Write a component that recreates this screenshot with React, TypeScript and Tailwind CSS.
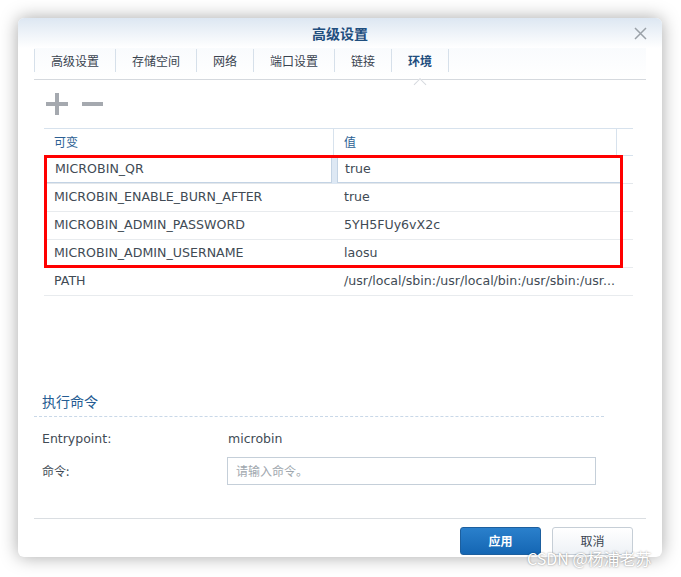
import React from 'react';

const font = { fontFamily: '"DejaVu Sans", "Noto Sans CJK SC", sans-serif' };
const cjk = { fontFamily: '"Noto Sans CJK SC", "DejaVu Sans", sans-serif' };

const tabs = ['高级设置', '存储空间', '网络', '端口设置', '链接', '环境'];

const rows: [string, string][] = [
  ['MICROBIN_ENABLE_BURN_AFTER', 'true'],
  ['MICROBIN_ADMIN_PASSWORD', '5YH5FUy6vX2c'],
  ['MICROBIN_ADMIN_USERNAME', 'laosu'],
  ['PATH', '/usr/local/sbin:/usr/local/bin:/usr/sbin:/usr...'],
];

export default function App() {
  return (
    <div className="relative h-[577px] w-[681px] overflow-hidden bg-white pl-[18px] pt-[18px]" style={font}>
      <div className="flex h-[539px] w-[644px] flex-col rounded-[6px] bg-white shadow-[0_0_18px_rgba(0,0,0,0.35)]">
        {/* header */}
        <div className="relative flex h-[30px] items-center justify-center rounded-t-[6px] bg-gradient-to-b from-[#dde7f2] to-white">
          <span className="text-[14px] font-bold text-[#1f4e7e]" style={cjk}>高级设置</span>
          <svg className="absolute right-[15px] top-[9px]" width="13" height="13" viewBox="0 0 13 13">
            <path d="M1 1L12 12M12 1L1 12" stroke="#9aa1a8" strokeWidth="1.5" />
          </svg>
        </div>
        {/* tabs */}
        <div className="mx-4 flex h-[32px] border-b border-[#d5d9de] bg-gradient-to-b from-[#f9fbfd] to-white pt-[1px]">
          {tabs.map((t, i) => (
            <div
              key={t}
              className={`relative flex h-[23px] items-center border-l border-[#d6e0ea] px-[16px] text-[12px] ${i === tabs.length - 1 ? 'border-r font-bold text-[#1f4e7e]' : 'text-[#3a4450]'}`}
              style={cjk}
            >
              <span className="pt-[1px]">{t}</span>
              {i === tabs.length - 1 && (
                <span className="absolute left-1/2 top-[31px] h-[9px] w-[9px] -translate-x-1/2 rotate-45 border-l border-t border-[#d5d9de] bg-white" />
              )}
            </div>
          ))}
        </div>
        {/* toolbar */}
        <div className="flex h-[48px] items-center gap-[14px] pl-[28px]">
          <svg width="22" height="22" viewBox="0 0 22 22">
            <rect x="0" y="9" width="22" height="4" fill="#a5a9af" />
            <rect x="9" y="0" width="4" height="22" fill="#a5a9af" />
          </svg>
          <svg width="22" height="22" viewBox="0 0 22 22">
            <rect x="0" y="9" width="21" height="4" fill="#a5a9af" />
          </svg>
        </div>
        {/* table */}
        <div className="relative ml-[26px] w-[589px] text-[12.6px] text-[#414b55]">
          <div className="flex h-[28px] border-y border-[#d7e2ed] text-[12px] text-[#2c5f94]" style={cjk}>
            <div className="flex w-[290px] items-center border-r border-[#d7e2ed] pl-[10px]">可变</div>
            <div className="flex w-[283px] items-center border-r border-[#d7e2ed] pl-[10px]">值</div>
            <div className="flex-1" />
          </div>
          <div className="flex h-[28px] items-center border-b border-[#e3e7eb] px-[2px]">
            <div className="flex h-[26px] w-[286px] items-center border border-[#c3d3e4] bg-white pl-[8px]">MICROBIN_QR</div>
            <div className="flex h-[28px] w-[5px] bg-[#dde8f4]" />
            <div className="flex h-[26px] w-[284px] items-center border border-[#c3d3e4] bg-white pl-[7px]">true</div>
          </div>
          {rows.map(([k, v]) => (
            <div key={k} className="flex h-[28px] items-center border-b border-[#e8ebee]">
              <div className="w-[290px] pl-[10px]">{k}</div>
              <div className="w-[290px] truncate pl-[10px]">{v}</div>
            </div>
          ))}
          <div className="pointer-events-none absolute left-0 top-[27px] h-[113px] w-[579px] border-[3px] border-[#ff0000]" />
        </div>
        {/* command section */}
        <div className="ml-[16px] mt-[95px] w-[570px]">
          <div className="border-b border-dashed border-[#c9d8e8] pb-[4px] pl-[8px] text-[14px] text-[#245b92]" style={cjk}>
            执行命令
          </div>
          <div className="mt-[12px] flex h-[20px] items-center pl-[8px] text-[12.5px] text-[#414b55]">
            <span className="w-[186px]">Entrypoint:</span>
            <span>microbin</span>
          </div>
          <div className="mt-[8px] flex items-center pl-[8px] text-[12px] text-[#414b55]">
            <span className="w-[185px]" style={cjk}>命令:</span>
            <div className="flex h-[28px] w-[369px] items-center border border-[#c5cfd9] pl-[8px] text-[#a0a7ae]" style={cjk}>
              请输入命令。
            </div>
          </div>
        </div>
        {/* footer */}
        <div className="mx-4 mt-auto flex h-[39px] items-start justify-end gap-[11px] border-t border-[#dadee2] pt-[8px]">
          <button className="flex h-[28px] w-[81px] items-center justify-center rounded-[3px] border border-[#1d5f9e] bg-gradient-to-b from-[#2a80cc] to-[#1466b3] text-[12px] font-bold text-white" style={cjk}>
            应用
          </button>
          <button className="mr-[13px] flex h-[28px] w-[81px] items-center justify-center rounded-[3px] border border-[#c6ced6] bg-gradient-to-b from-white to-[#eef2f6] text-[12px] text-[#3a4450]" style={cjk}>
            取消
          </button>
        </div>
      </div>
      <div
        className="absolute left-[527px] top-[546px] text-[16px] text-white [text-shadow:0_0_2px_rgba(0,0,0,0.45)]"
        style={cjk}
      >
        CSDN @杨浦老苏
      </div>
    </div>
  );
}
